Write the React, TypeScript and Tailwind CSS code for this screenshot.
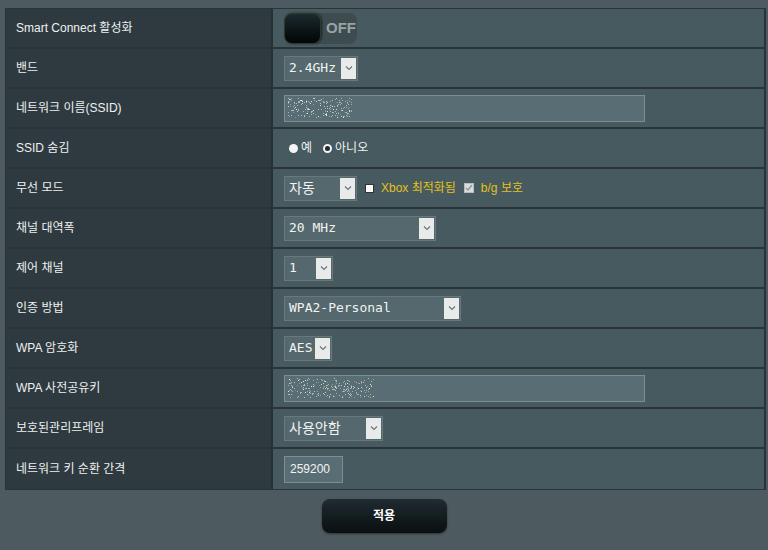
import React from 'react';

const sans = { fontFamily: '"Liberation Sans", Arial, "Noto Sans CJK KR", sans-serif' };
const mono = { fontFamily: '"DejaVu Sans Mono", "Liberation Mono", "Noto Sans CJK KR", monospace' };

// scrambled (masked) characters shown in the ssid / key fields
function makeNoise(seed: number, w: number, h: number, n: number) {
  let s = seed;
  const rnd = () => {
    s = (s * 1103515245 + 12345) % 2147483648;
    return s / 2147483648;
  };
  const colors = ['#c9d2d4', '#9fb2b8', '#e6e0c8', '#a9c4d6', '#d8b6b6', '#b8d0b4', '#ffffff', '#8aa0a8', '#d9c79a', '#9cc3e0'];
  const dots = [];
  for (let i = 0; i < n; i++) {
    dots.push({
      x: Math.floor(rnd() * w),
      y: Math.floor(rnd() * h),
      c: colors[Math.floor(rnd() * colors.length)],
    });
  }
  return dots;
}

const noiseA = makeNoise(7, 64, 20, 200);
const noiseB = makeNoise(19, 86, 20, 240);

function Noise({ dots, w }: { dots: { x: number; y: number; c: string }[]; w: number }) {
  return (
    <svg width={w} height={20} className="block">
      {dots.map((d, i) => (
        <rect key={i} x={d.x} y={d.y} width={1} height={1} fill={d.c} opacity={0.8} />
      ))}
    </svg>
  );
}

function Arrow() {
  return (
    <div className="w-[15px] self-stretch m-[1px] bg-[#e9ebeb] flex items-center justify-center">
      <svg width="8" height="6" viewBox="0 0 8 6">
        <path d="M1 1.5 L4 4.5 L7 1.5" fill="none" stroke="#6b7679" strokeWidth="1.2" />
      </svg>
    </div>
  );
}

function Select({ value, width, korean }: { value: string; width: string; korean?: boolean }) {
  return (
    <div className={`${width} h-[25px] flex items-stretch border border-[#68797e] bg-[#55686d] shadow-[0_0_0_1px_#4a5b60]`}>
      <div
        className={`flex-1 flex items-center pl-[4px] text-[#f1f3f3] ${korean ? 'text-[14px]' : 'text-[13px]'}`}
        style={korean ? sans : mono}
      >
        {value}
      </div>
      <Arrow />
    </div>
  );
}

function Row({ label, children, last }: { label: string; children: React.ReactNode; last?: boolean }) {
  return (
    <div className={`flex h-[40px] ${last ? '' : 'border-b-2 border-[#2a3438]'}`}>
      <div className="w-[267px] shrink-0 bg-[#2e3a3f] border-r-2 border-[#263034] flex items-center pl-[10px] text-[12px] text-[#eef0f0]">
        {label}
      </div>
      <div className="flex-1 bg-[#475a5f] flex items-center pl-[11px] gap-[8px]">{children}</div>
    </div>
  );
}

export default function App() {
  return (
    <div className="w-[768px] h-[550px] bg-[#4d5a5f] pt-[8px]" style={sans}>
      <div className="ml-[5px] w-[761px] border border-r-2 border-[#2a3438]">
        <Row label="Smart Connect 활성화">
          <div className="w-[73px] h-[31px] rounded-[8px] bg-[#3e4c50] flex items-center">
            <div className="w-[37px] h-[31px] rounded-[8px] bg-gradient-to-b from-[#1d2a2e] to-[#030606] border border-[#2c3a30] shadow-[1px_0_2px_#1a2326]" />
            <span className="ml-[5px] text-[15px] font-bold text-[#98a3a6]">OFF</span>
          </div>
        </Row>
        <Row label="밴드">
          <Select value="2.4GHz" width="w-[74px]" />
        </Row>
        <Row label="네트워크 이름(SSID)">
          <div className="w-[361px] h-[27px] border border-[#7c8e92] bg-[#596e74] flex items-center pl-[3px]">
            <Noise dots={noiseA} w={64} />
          </div>
        </Row>
        <Row label="SSID 숨김">
          <div className="flex items-center gap-[3px] text-[12px] text-[#f1f3f3] ml-[5px]">
            <span className="w-[9px] h-[9px] rounded-full bg-[#f4f4f4]" />
            <span>예</span>
            <span className="ml-[8px] w-[9px] h-[9px] rounded-full bg-[#1f2a2d] border-[2px] border-[#f4f4f4]" />
            <span>아니오</span>
          </div>
        </Row>
        <Row label="무선 모드">
          <Select value="자동" width="w-[73px]" korean />
          <div className="flex items-center gap-[7px] text-[12px] text-[#e3c11d]">
            <span className="w-[9px] h-[9px] bg-[#fafafa] border border-[#333]" />
            <span>Xbox 최적화됨</span>
            <span className="ml-[1px] w-[10px] h-[10px] bg-[#d8dcdd] border border-[#b8bebf] flex items-center justify-center">
              <svg width="8" height="8" viewBox="0 0 8 8">
                <path d="M1 4 L3 6 L7 1" fill="none" stroke="#8e9799" strokeWidth="1.4" />
              </svg>
            </span>
            <span>b/g 보호</span>
          </div>
        </Row>
        <Row label="채널 대역폭">
          <Select value="20 MHz" width="w-[152px]" />
        </Row>
        <Row label="제어 채널">
          <Select value="1" width="w-[49px]" />
        </Row>
        <Row label="인증 방법">
          <Select value="WPA2-Personal" width="w-[177px]" />
        </Row>
        <Row label="WPA 암호화">
          <Select value="AES" width="w-[48px]" />
        </Row>
        <Row label="WPA 사전공유키">
          <div className="w-[361px] h-[27px] border border-[#7c8e92] bg-[#596e74] flex items-center pl-[3px]">
            <Noise dots={noiseB} w={86} />
          </div>
        </Row>
        <Row label="보호된관리프레임">
          <Select value="사용안함" width="w-[99px]" korean />
        </Row>
        <Row label="네트워크 키 순환 간격" last>
          <div className="w-[59px] h-[27px] border border-[#7c8e92] bg-[#596e74] flex items-center pl-[5px] text-[12px] text-[#f1f3f3]">
            259200
          </div>
        </Row>
      </div>
      <div className="flex justify-center mt-[9px]">
        <button className="w-[125px] h-[34px] rounded-[8px] bg-gradient-to-b from-[#1f2c31] to-[#0b0f10] text-white text-[12px] font-bold shadow-[0_1px_2px_#2a3336]">
          적용
        </button>
      </div>
    </div>
  );
}
